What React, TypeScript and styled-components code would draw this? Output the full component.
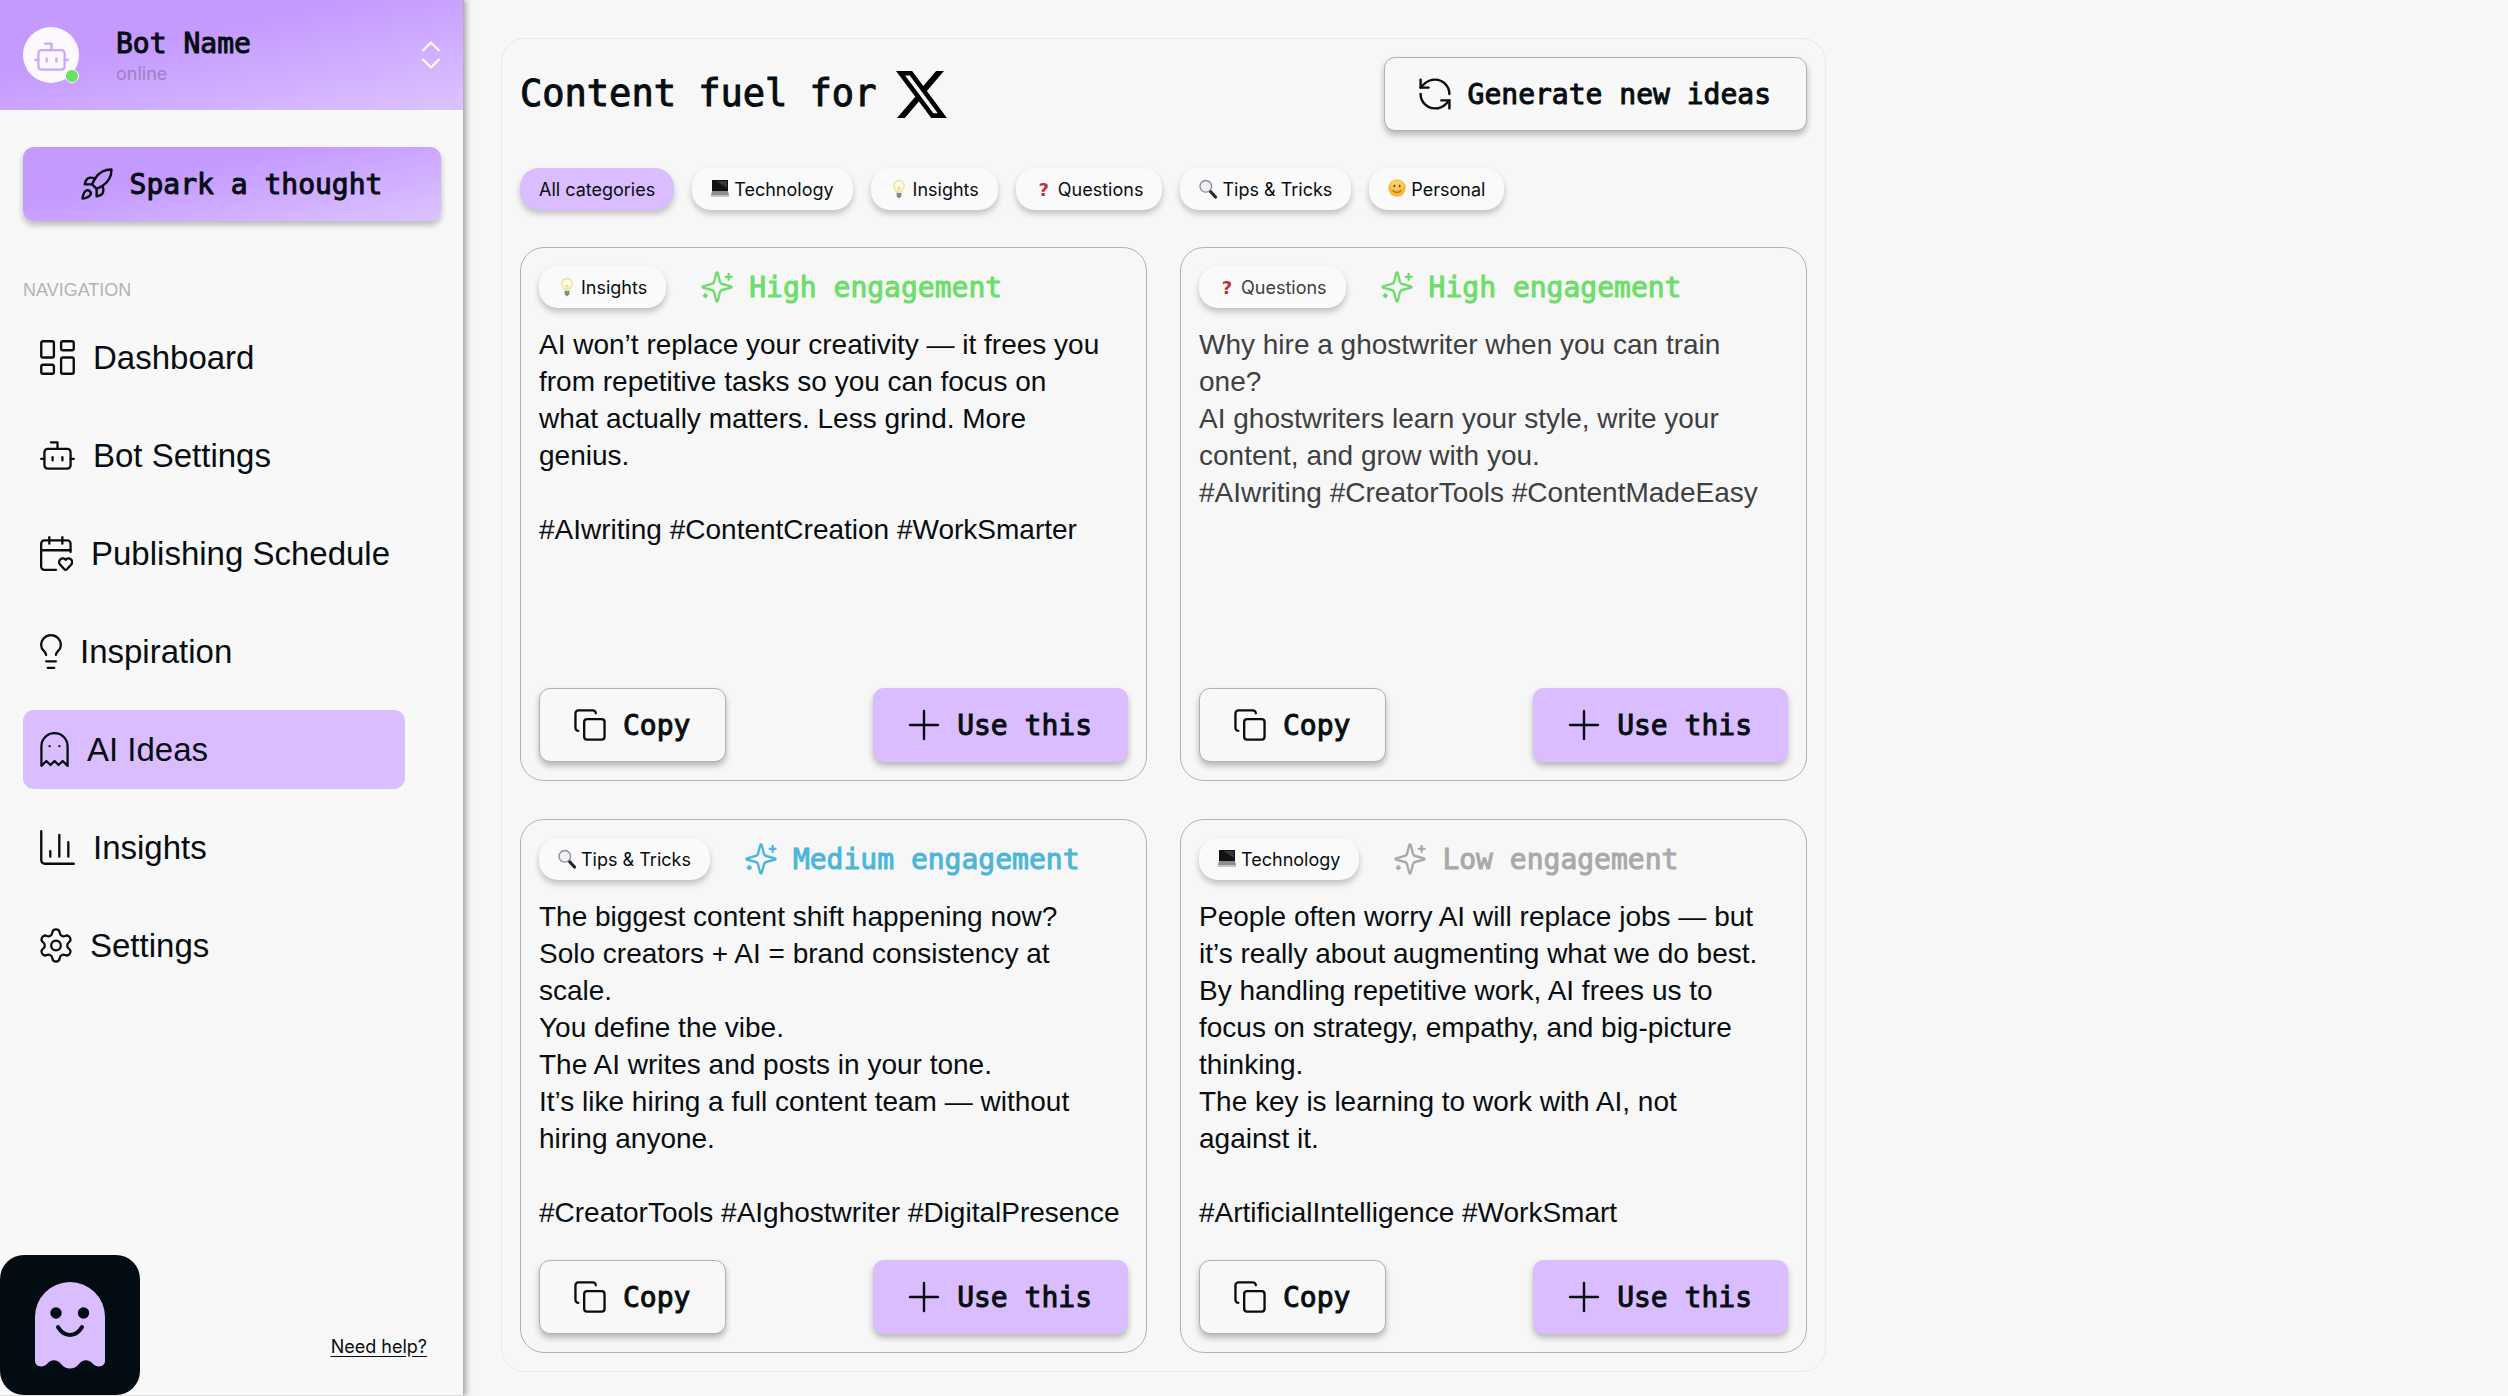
import React, { useState } from "react";
import styled, { createGlobalStyle, css } from "styled-components";
import {
  Bot,
  CalendarHeart,
  ChevronsUpDown,
  Copy,
  Ghost,
  LayoutDashboard,
  Lightbulb,
  RefreshCcw,
  Settings,
} from "lucide-react";

const color = {
  ink: "#070d11",
  page: "#f7f7f7",
  surface: "#f8f8f8",
  lilac: "#d9bdff",
  line: "#b2b2b2",
  muted: "#b3b3b3",
  high: "#6fdd6b",
  medium: "#4db5da",
  low: "#a9a9a9",
};

const gradient = "linear-gradient(168deg, #c49aff 35%, #dcc3ff 100%)";
const lift = "0 4px 6px rgba(0, 0, 0, 0.26)";

const GlobalStyle = createGlobalStyle`
  *, *::before, *::after { box-sizing: border-box; }
  body {
    margin: 0;
    background: ${color.page};
    color: ${color.ink};
    font-family: "Liberation Sans", Arial, sans-serif;
  }
  button { font: inherit; color: inherit; cursor: pointer; }
  svg { display: block; flex: none; }
`;

const mono = css`
  font-family: "DejaVu Sans Mono", "Liberation Mono", monospace;
  font-weight: 400;
  -webkit-text-stroke: 1px currentColor;
`;

const smallText = css`
  font-family: Inter, "Liberation Sans", sans-serif;
  font-size: 18px;
`;

/* ---------- layout ---------- */

const Shell = styled.div`
  display: flex;
  align-items: stretch;
  min-height: 100vh;
`;

const Sidebar = styled.aside`
  position: relative;
  z-index: 1;
  display: flex;
  flex-direction: column;
  flex: none;
  width: 464px;
  background: ${color.surface};
  border-right: 1px solid ${color.line};
  border-bottom: 1px solid #dddddd;
  box-shadow: 2px 0 6px rgba(0, 0, 0, 0.35);
`;

const Main = styled.main`
  flex: 1;
  min-width: 0;
  padding: 38px 37px 23px;
`;

const Panel = styled.section`
  display: flex;
  flex-direction: column;
  gap: 37px;
  max-width: 1325px;
  padding: 18px;
  border: 1px solid #e9e9e9;
  border-radius: 24px;
`;

/* ---------- sidebar ---------- */

const BotHeader = styled.header`
  display: flex;
  align-items: center;
  height: 110px;
  padding: 0 23px;
  background: ${gradient};
`;

const Avatar = styled.div`
  position: relative;
  display: grid;
  place-items: center;
  width: 56px;
  height: 56px;
  border-radius: 50%;
  background: #fbf9fd;
  color: #cba8fb;
`;

const OnlineDot = styled.span`
  position: absolute;
  right: 0;
  bottom: 0;
  width: 14px;
  height: 14px;
  border: 1px solid #ffffff;
  border-radius: 50%;
  background: #66e25f;
`;

const BotInfo = styled.div`
  flex: 1;
  margin-left: 37px;
`;

const BotName = styled.div`
  ${mono}
  font-size: 28px;
  line-height: 37px;
`;

const BotStatus = styled.div`
  ${smallText}
  line-height: 24px;
  color: #a080c4;
`;

const PlainButton = styled.button`
  padding: 0;
  border: 0;
  background: none;
  color: #ffffff;
`;

const SidebarBody = styled.div`
  display: flex;
  flex-direction: column;
  padding: 37px 22px 0 23px;
`;

const NavTitle = styled.h2`
  margin: 58px 0 17px;
  font-size: 18px;
  font-weight: 400;
  line-height: 22px;
  color: ${color.muted};
`;

const NavList = styled.nav`
  display: flex;
  flex-direction: column;
  gap: 19px;
  padding-right: 36px;
`;

const NavLink = styled.a<{ $active: boolean }>`
  display: flex;
  align-items: center;
  gap: 18px;
  height: 79px;
  padding: 0 17px;
  border-radius: 11px;
  background: ${(p) => (p.$active ? color.lilac : "transparent")};
  color: inherit;
  font-size: 33px;
  text-decoration: none;
  white-space: nowrap;
`;

const SidebarFooter = styled.footer`
  display: flex;
  align-items: flex-end;
  justify-content: space-between;
  margin-top: auto;
  padding-right: 36px;
`;

const LogoTile = styled.div`
  width: 140px;
  height: 140px;
  border-radius: 24px;
  background: #030c12;
`;

const HelpLink = styled.a`
  ${smallText}
  margin-bottom: 36px;
  color: inherit;
  line-height: 24px;
  text-underline-offset: 3px;
`;

/* ---------- shared controls ---------- */

type Variant = "outline" | "solid" | "gradient";

const ActionButton = styled.button<{ $variant: Variant }>`
  ${mono}
  display: flex;
  align-items: center;
  justify-content: center;
  gap: 17px;
  height: 74px;
  padding: 0 35px 0 34px;
  border: 1px solid ${(p) => (p.$variant === "outline" ? color.line : "transparent")};
  border-radius: 11px;
  background: ${(p) =>
    p.$variant === "outline"
      ? color.surface
      : p.$variant === "solid"
        ? color.lilac
        : gradient};
  background-origin: border-box;
  box-shadow: ${lift};
  font-size: 28px;
  white-space: nowrap;
`;

const chipStyle = css`
  ${smallText}
  display: flex;
  align-items: center;
  gap: 5px;
  height: 42px;
  padding: 0 19px;
  border: 0;
  border-radius: 19px;
  box-shadow: 0 4px 6px rgba(0, 0, 0, 0.22);
  white-space: nowrap;
`;

const FilterChip = styled.button<{ $active: boolean }>`
  ${chipStyle}
  background: ${(p) => (p.$active ? color.lilac : "#fafafa")};
`;

const Tag = styled.span<{ $dim: boolean }>`
  ${chipStyle}
  background: #fafafa;
  color: ${(p) => (p.$dim ? "#3d3f41" : color.ink)};
`;

const QuestionMark = styled.span`
  width: 18px;
  color: #c03038;
  font-family: "DejaVu Sans", sans-serif;
  font-weight: 700;
  text-align: center;
`;

/* ---------- panel ---------- */

const PanelHeader = styled.header`
  display: flex;
  align-items: center;
  justify-content: space-between;
`;

const Title = styled.h1`
  ${mono}
  display: flex;
  align-items: center;
  gap: 20px;
  margin: 0;
  font-size: 37px;
  line-height: 48px;
`;

const Filters = styled.div`
  display: flex;
  flex-wrap: wrap;
  gap: 18px;
`;

const IdeaGrid = styled.div`
  display: grid;
  grid-template-columns: repeat(2, minmax(0, 1fr));
  grid-auto-rows: 1fr;
  gap: 38px 33px;
`;

const Card = styled.article`
  display: flex;
  flex-direction: column;
  padding: 18px;
  border: 1px solid ${color.line};
  border-radius: 24px;
`;

const CardTop = styled.header`
  display: flex;
  align-items: center;
  gap: 35px;
`;

const Engagement = styled.div<{ $tone: string }>`
  ${mono}
  display: flex;
  align-items: center;
  gap: 16px;
  color: ${(p) => p.$tone};
  font-size: 28px;
  line-height: 37px;
`;

const IdeaText = styled.p<{ $dim: boolean }>`
  flex: 1;
  margin: 18px 0 29px;
  color: ${(p) => (p.$dim ? "#3d3f41" : color.ink)};
  font-size: 28px;
  line-height: 37px;
  white-space: pre-line;
`;

const CardActions = styled.footer`
  display: flex;
  justify-content: space-between;
`;

/* ---------- drawings ---------- */

const RocketIcon = () => (
  <svg width="32" height="32" viewBox="1.5 1 21.5 21.5" fill="none" stroke="currentColor" strokeWidth="1.6" strokeLinecap="round" strokeLinejoin="round">
    <path d="M4.5 16.5c-1.5 1.26-2 5-2 5s3.74-.5 5-2c.71-.84.7-2.13-.09-2.91a2.18 2.18 0 0 0-2.91-.09z" />
    <path d="m12 15-3-3a22 22 0 0 1 2-3.95A12.88 12.88 0 0 1 22 2c0 2.72-.78 7.5-6 11a22.35 22.35 0 0 1-4 2z" />
    <path d="M9 12H4s.55-3.03 2-4c1.62-1.08 5 0 5 0" />
    <path d="M12 15v5s3.03-.55 4-2c1.08-1.62 0-5 0-5" />
  </svg>
);

const SparklesIcon = () => (
  <svg width="32" height="32" viewBox="1 1 22 22" fill="none" stroke="currentColor" strokeWidth="1.6" strokeLinecap="round" strokeLinejoin="round">
    <path d="M9.937 15.5A2 2 0 0 0 8.5 14.063l-6.135-1.582a.5.5 0 0 1 0-.962L8.5 9.936A2 2 0 0 0 9.937 8.5l1.582-6.135a.5.5 0 0 1 .963 0L14.063 8.5A2 2 0 0 0 15.5 9.937l6.135 1.581a.5.5 0 0 1 0 .964L15.5 14.063a2 2 0 0 0-1.437 1.437l-1.582 6.135a.5.5 0 0 1-.963 0z" />
    <path d="M20 3v4M22 5h-4M4 17v2M5 18H3" />
  </svg>
);

const PlusIcon = () => (
  <svg width="32" height="32" viewBox="0 0 32 32" fill="none" stroke="currentColor" strokeWidth="2.4" strokeLinecap="round">
    <path d="M16 2v28M2 16h28" />
  </svg>
);

const ChartIcon = () => (
  <svg width="35" height="35" viewBox="2.3 2.3 19.4 19.4" fill="none" stroke="currentColor" strokeWidth="1.3" strokeLinecap="round" strokeLinejoin="round">
    <path d="M3 3v16a2 2 0 0 0 2 2h16M18 17V9M13 17V5M8 17v-3" />
  </svg>
);

const XLogo = () => (
  <svg width="51" height="47" viewBox="1.25 2.25 21.6 19.5" preserveAspectRatio="none" fill="#000" role="img" aria-label="X">
    <path d="M18.244 2.25h3.308l-7.227 8.26 8.502 11.24H16.17l-5.214-6.817L4.99 21.75H1.68l7.73-8.835L1.254 2.25H8.08l4.713 6.231zm-1.161 17.52h1.833L7.084 4.126H5.117z" />
  </svg>
);

const GhostLogo = () => (
  <svg width="140" height="140" viewBox="0 0 140 140">
    <path
      d="M35 62a35 35 0 0 1 70 0v44c0 6-8 7-12 3-4-5-10-5-14 0-5 6-13 6-18 0-4-5-10-5-14 0-4 4-12 3-12-3z"
      fill={color.lilac}
    />
    <circle cx="56" cy="58" r="5.7" fill="#030c12" />
    <circle cx="83.5" cy="58" r="5.7" fill="#030c12" />
    <path d="M58 72c6 10.5 18 10.5 24 0" fill="none" stroke="#030c12" strokeWidth="4" strokeLinecap="round" />
  </svg>
);

const LaptopEmoji = () => (
  <svg width="18" height="18" viewBox="0 0 18 18" aria-hidden="true">
    <path d="M1 0h16v11H1z" fill="#111214" />
    <path d="M5 1h11v7z" fill="#34363a" />
    <path d="M1 11h16l1 4H0z" fill="#8b8d90" />
    <path d="M0 15h18v2H0z" fill="#c4c6c9" />
  </svg>
);

const BulbEmoji = () => (
  <svg width="18" height="20" viewBox="0 0 18 20" aria-hidden="true">
    <path d="M9 1.5a5.2 5.2 0 0 0-5.2 5.3c0 3 2.7 4 2.9 7.2h4.6c.2-3.2 2.9-4.2 2.9-7.2A5.2 5.2 0 0 0 9 1.5z" fill="#fdfbe6" stroke="#ece392" strokeWidth="1.3" />
    <path d="M8 13V8.5h2V13" fill="none" stroke="#e6c75a" strokeWidth=".8" />
    <path d="M6.7 14h4.6v3.5L9 19.5l-2.3-2z" fill="#85888c" />
  </svg>
);

const LensEmoji = () => (
  <svg width="18" height="20" viewBox="0 0 18 20" aria-hidden="true">
    <path d="m10.5 11.5 6 6.5" stroke="#26282b" strokeWidth="3.2" strokeLinecap="round" />
    <circle cx="6.8" cy="7.3" r="5.8" fill="#eef1f3" stroke="#8b8e92" strokeWidth="1.3" />
  </svg>
);

const SmileEmoji = () => (
  <svg width="18" height="20" viewBox="0 0 18 20" aria-hidden="true">
    <circle cx="9" cy="9" r="8.7" fill="#f6b83c" />
    <ellipse cx="9" cy="6" rx="6.5" ry="5" fill="#fbd162" />
    <ellipse cx="6.3" cy="7" rx="1" ry="1.5" fill="#7a4c12" />
    <ellipse cx="11.7" cy="7" rx="1" ry="1.5" fill="#7a4c12" />
    <path d="M5 11.5c2 2.6 6 2.6 8 0" fill="none" stroke="#a8691a" strokeWidth="1.2" strokeLinecap="round" />
  </svg>
);

/* ---------- data ---------- */

const categories: Record<string, React.ReactNode> = {
  "All categories": null,
  Technology: <LaptopEmoji />,
  Insights: <BulbEmoji />,
  Questions: <QuestionMark>?</QuestionMark>,
  "Tips & Tricks": <LensEmoji />,
  Personal: <SmileEmoji />,
};

const navItems = [
  { label: "Dashboard", icon: <LayoutDashboard width={35} height={35} viewBox="2.3 2.3 19.4 19.4" strokeWidth={1.3} /> },
  { label: "Bot Settings", icon: <Bot width={35} height={35} viewBox="1.3 1.3 21.4 21.4" strokeWidth={1.4} /> },
  { label: "Publishing Schedule", icon: <CalendarHeart width={33} height={35} viewBox="2.3 1.3 20.2 21.4" strokeWidth={1.4} /> },
  { label: "Inspiration", icon: <Lightbulb width={22} height={35} viewBox="5.3 1.3 13.4 21.4" strokeWidth={1.4} /> },
  { label: "AI Ideas", icon: <Ghost width={29} height={35} viewBox="3.2 1.3 17.6 21.4" strokeWidth={1.4} /> },
  { label: "Insights", icon: <ChartIcon /> },
  { label: "Settings", icon: <Settings width={32} height={35} viewBox="2.2 1.1 19.6 21.8" strokeWidth={1.4} /> },
];

const ideas = [
  {
    category: "Insights",
    engagement: "High engagement",
    tone: color.high,
    dim: false,
    text: "AI won’t replace your creativity — it frees you\nfrom repetitive tasks so you can focus on\nwhat actually matters. Less grind. More\ngenius.\n\n#AIwriting #ContentCreation #WorkSmarter",
  },
  {
    category: "Questions",
    engagement: "High engagement",
    tone: color.high,
    dim: true,
    text: "Why hire a ghostwriter when you can train\none?\nAI ghostwriters learn your style, write your\ncontent, and grow with you.\n#AIwriting #CreatorTools #ContentMadeEasy",
  },
  {
    category: "Tips & Tricks",
    engagement: "Medium engagement",
    tone: color.medium,
    dim: false,
    text: "The biggest content shift happening now?\nSolo creators + AI = brand consistency at\nscale.\nYou define the vibe.\nThe AI writes and posts in your tone.\nIt’s like hiring a full content team — without\nhiring anyone.\n\n#CreatorTools #AIghostwriter #DigitalPresence",
  },
  {
    category: "Technology",
    engagement: "Low engagement",
    tone: color.low,
    dim: false,
    text: "People often worry AI will replace jobs — but\nit’s really about augmenting what we do best.\nBy handling repetitive work, AI frees us to\nfocus on strategy, empathy, and big-picture\nthinking.\nThe key is learning to work with AI, not\nagainst it.\n\n#ArtificialIntelligence #WorkSmart",
  },
];

export default function App() {
  const [filter, setFilter] = useState("All categories");

  return (
    <>
      <GlobalStyle />
      <Shell>
        <Sidebar>
          <BotHeader>
            <Avatar>
              <Bot width={35} height={35} viewBox="1.3 0.6 21.4 21.4" strokeWidth={1.4} />
              <OnlineDot />
            </Avatar>
            <BotInfo>
              <BotName>Bot Name</BotName>
              <BotStatus>online</BotStatus>
            </BotInfo>
            <PlainButton aria-label="Switch bot">
              <ChevronsUpDown width={18} height={28} viewBox="6.2 3 11.6 18" strokeWidth={1.4} />
            </PlainButton>
          </BotHeader>
          <SidebarBody>
            <ActionButton $variant="gradient">
              <RocketIcon />
              Spark a thought
            </ActionButton>
            <NavTitle>NAVIGATION</NavTitle>
            <NavList>
              {navItems.map((item) => (
                <NavLink key={item.label} href="#" $active={item.label === "AI Ideas"}>
                  {item.icon}
                  {item.label}
                </NavLink>
              ))}
            </NavList>
          </SidebarBody>
          <SidebarFooter>
            <LogoTile>
              <GhostLogo />
            </LogoTile>
            <HelpLink href="#">Need help?</HelpLink>
          </SidebarFooter>
        </Sidebar>

        <Main>
          <Panel>
            <PanelHeader>
              <Title>
                Content fuel for
                <XLogo />
              </Title>
              <ActionButton $variant="outline">
                <RefreshCcw width={32} height={32} viewBox="2 2 20 20" strokeWidth={1.5} />
                Generate new ideas
              </ActionButton>
            </PanelHeader>
            <Filters>
              {Object.entries(categories).map(([name, emoji]) => (
                <FilterChip key={name} $active={name === filter} onClick={() => setFilter(name)}>
                  {emoji}
                  {name}
                </FilterChip>
              ))}
            </Filters>
            <IdeaGrid>
              {ideas
                .filter((idea) => filter === "All categories" || idea.category === filter)
                .map((idea) => (
                  <Card key={idea.category}>
                    <CardTop>
                      <Tag $dim={idea.dim}>
                        {categories[idea.category]}
                        {idea.category}
                      </Tag>
                      <Engagement $tone={idea.tone}>
                        <SparklesIcon />
                        {idea.engagement}
                      </Engagement>
                    </CardTop>
                    <IdeaText $dim={idea.dim}>{idea.text}</IdeaText>
                    <CardActions>
                      <ActionButton $variant="outline">
                        <Copy width={32} height={32} viewBox="1 1 22 22" strokeWidth={1.6} />
                        Copy
                      </ActionButton>
                      <ActionButton $variant="solid">
                        <PlusIcon />
                        Use this
                      </ActionButton>
                    </CardActions>
                  </Card>
                ))}
            </IdeaGrid>
          </Panel>
        </Main>
      </Shell>
    </>
  );
}
